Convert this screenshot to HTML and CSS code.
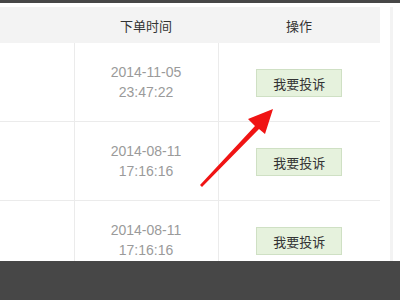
FILE: index.html
```html
<!DOCTYPE html>
<html lang="zh-CN">
<head>
    <meta charset="UTF-8">
    <title>订单列表</title>
    <link rel="stylesheet" href="styles.css">
</head>
<body>

<div class="top-bar"></div>

<div class="page">
    <div class="content">
        <table class="orders">
            <thead>
                <tr>
                    <th class="col-info"></th>
                    <th class="col-time">下单时间</th>
                    <th class="col-action">操作</th>
                </tr>
            </thead>
            <tbody>
                <tr>
                    <td></td>
                    <td class="time">2014-11-05<br>23:47:22</td>
                    <td><button class="complain">我要投诉</button></td>
                </tr>
                <tr>
                    <td></td>
                    <td class="time">2014-08-11<br>17:16:16</td>
                    <td><button class="complain">我要投诉</button></td>
                </tr>
                <tr>
                    <td></td>
                    <td class="time">2014-08-11<br>17:16:16</td>
                    <td><button class="complain">我要投诉</button></td>
                </tr>
            </tbody>
        </table>
        <div class="side-strip"></div>
    </div>

    <!-- flèche rouge par-dessus le tableau -->
    <svg class="arrow" width="90" height="90" viewBox="0 0 90 90">
        <path d="M5 84 L60 25 L53 18 L78 8 L70 33 L64 28 L7 86 Z" fill="#f01414"/>
    </svg>
</div>

<div class="bottom-bar"></div>

</body>
</html>
```

FILE: styles.css
```css
body {
    margin: 0;
    background-color: #fff;
    font-family: "Liberation Sans", "Noto Sans CJK SC", sans-serif;
}
.top-bar {
    height: 3px;
    background-color: #474747;
}
.page {
    position: relative;
    height: 254px;
    padding-top: 4px;
    overflow: hidden;
}
.content {
    display: flex;
}
.orders {
    width: 380px;
    border-collapse: collapse;
    table-layout: fixed;
}
.orders th {
    height: 36px;
    padding: 0;
    background-color: #f3f3f3;
    font-family: "Noto Sans CJK SC", sans-serif;
    font-weight: normal;
    font-size: 13px;
    color: #333;
    text-align: center;
}
.col-info {
    width: 74px;
}
.col-time {
    width: 144px;
}
.orders td {
    height: 78px;
    padding: 0;
    border-top: 1px solid #ebebeb;
    border-left: 1px solid #ebebeb;
    text-align: center;
}
.orders td:first-child {
    border-left: none;
}
.orders tbody tr:first-child td {
    border-top: none;
}
.time {
    font-size: 14px;
    line-height: 20px;
    color: #9a9a9a;
}
.complain {
    width: 86px;
    height: 28px;
    margin-top: 2px;
    padding: 0;
    background-color: #e6f2dd;
    border: 1px solid #cfe0c4;
    font-family: "Noto Sans CJK SC", sans-serif;
    font-size: 13px;
    color: #333;
}
.side-strip {
    width: 3px;
    height: 254px;
    margin-left: 10px;
    background-color: #f3f3f3;
}
.arrow {
    position: absolute;
    left: 195px;
    top: 98px;
}
.bottom-bar {
    height: 39px;
    background-color: #474747;
}
```
